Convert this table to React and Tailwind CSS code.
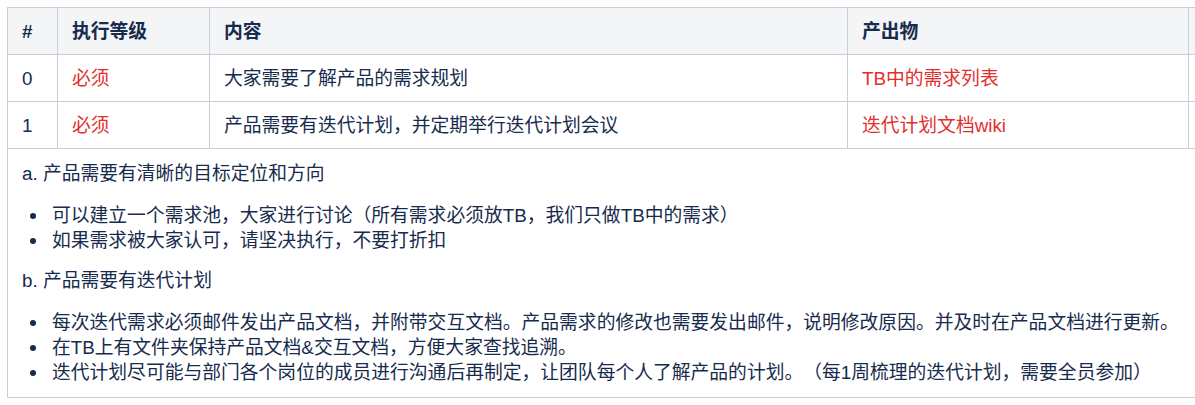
import React from "react";

const red = "text-[#e0302b]";

function Bullet({ children }) {
  return (
    <li className="flex items-center h-[25px]">
      <span className="ml-[8px] w-[6px] h-[6px] rounded-full bg-[#172b4d] shrink-0" />
      <span className="ml-[16px] whitespace-nowrap">{children}</span>
    </li>
  );
}

export default function App() {
  const font = {
    fontFamily: '"Liberation Sans", "Noto Sans CJK SC", sans-serif',
  };
  const th =
    "border border-[#c9cfd8] bg-[#f4f5f7] px-[14px] text-left font-bold align-middle";
  const td = "border border-[#c9cfd8] px-[14px] text-left align-middle";
  return (
    <div
      className="w-[1195px] h-[405px] overflow-hidden bg-white pt-[7px] pl-[7px] text-[18.8px] leading-[25px] text-[#172b4d] [text-spacing-trim:space-all]"
      style={font}
    >
      <table className="table-fixed border-collapse w-[1381px]">
        <colgroup>
          <col className="w-[50px]" />
          <col className="w-[152px]" />
          <col className="w-[638px]" />
          <col className="w-[341px]" />
          <col className="w-[200px]" />
        </colgroup>
        <thead>
          <tr className="h-[47px]">
            <th className={th}>#</th>
            <th className={th}>执行等级</th>
            <th className={th}>内容</th>
            <th className={th}>产出物</th>
            <th className={th}></th>
          </tr>
        </thead>
        <tbody>
          <tr className="h-[47px]">
            <td className={td}>0</td>
            <td className={`${td} ${red}`}>必须</td>
            <td className={td}>大家需要了解产品的需求规划</td>
            <td className={`${td} ${red}`}>TB中的需求列表</td>
            <td className={td}></td>
          </tr>
          <tr className="h-[47px]">
            <td className={td}>1</td>
            <td className={`${td} ${red}`}>必须</td>
            <td className={td}>产品需要有迭代计划，并定期举行迭代计划会议</td>
            <td className={`${td} ${red}`}>迭代计划文档wiki</td>
            <td className={td}></td>
          </tr>
          <tr>
            <td
              colSpan={5}
              className="border border-[#c9cfd8] px-[14px] pt-[12px] pb-[12px] align-top"
            >
              <p className="h-[25px] whitespace-nowrap">a. 产品需要有清晰的目标定位和方向</p>
              <ul className="mt-[17px]">
                <Bullet>可以建立一个需求池，大家进行讨论（所有需求必须放TB，我们只做TB中的需求）</Bullet>
                <Bullet>如果需求被大家认可，请坚决执行，不要打折扣</Bullet>
              </ul>
              <p className="mt-[15px] h-[25px] whitespace-nowrap">b. 产品需要有迭代计划</p>
              <ul className="mt-[17px]">
                <Bullet>每次迭代需求必须邮件发出产品文档，并附带交互文档。产品需求的修改也需要发出邮件，说明修改原因。并及时在产品文档进行更新。</Bullet>
                <Bullet>在TB上有文件夹保持产品文档&amp;交互文档，方便大家查找追溯。</Bullet>
                <Bullet>迭代计划尽可能与部门各个岗位的成员进行沟通后再制定，让团队每个人了解产品的计划。（每1周梳理的迭代计划，需要全员参加）</Bullet>
              </ul>
            </td>
          </tr>
        </tbody>
      </table>
    </div>
  );
}
